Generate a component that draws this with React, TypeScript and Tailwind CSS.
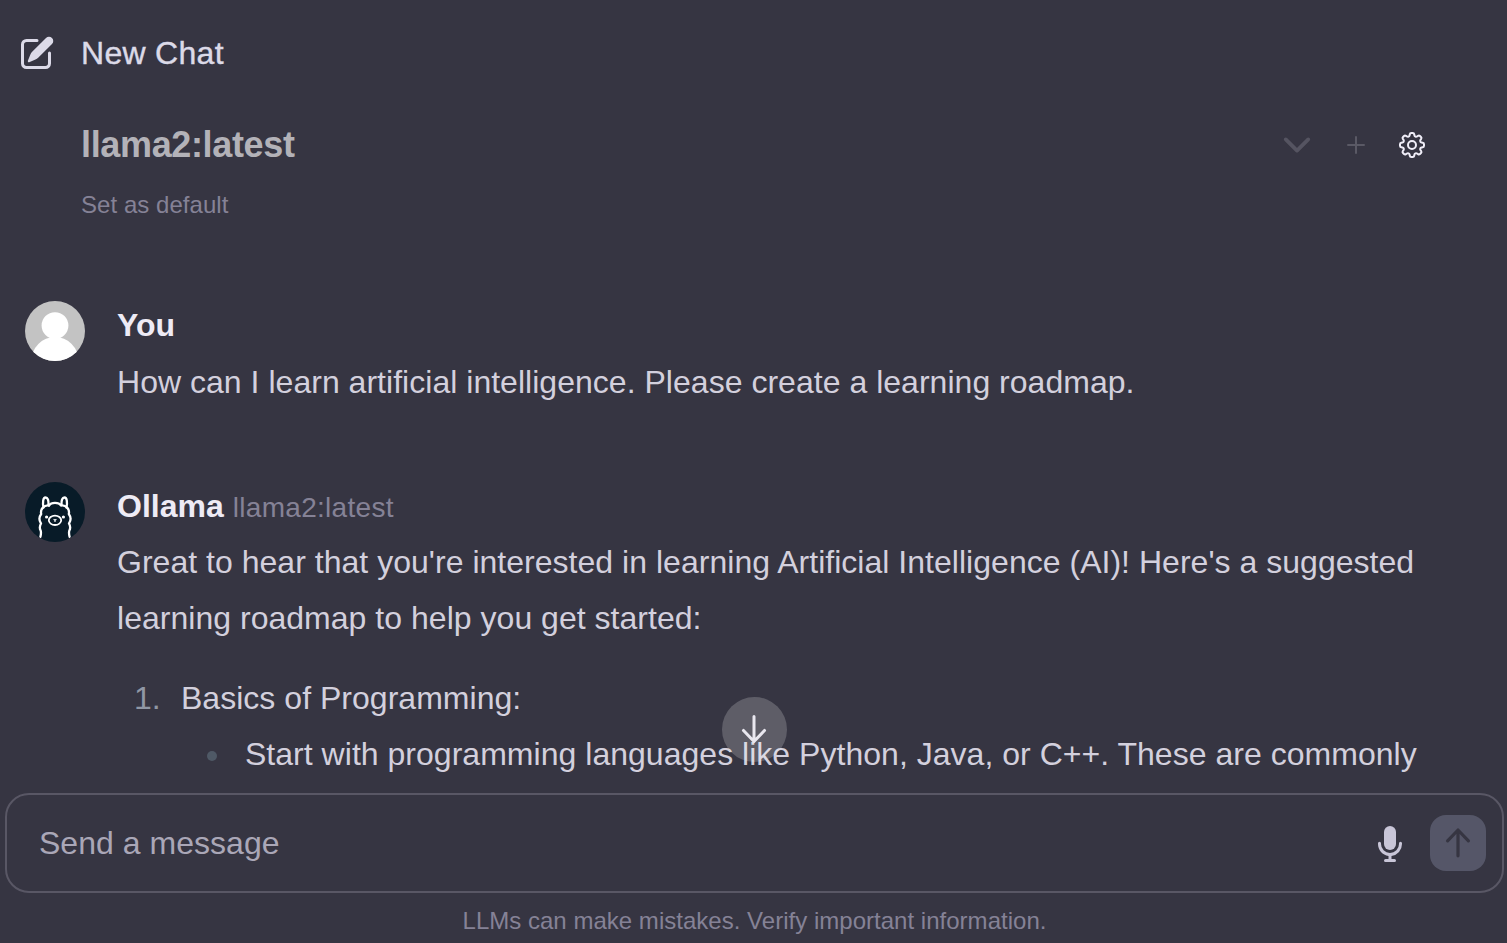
import React from 'react';

type IconProps = {
  className?: string;
};

const PencilSquareIcon = ({ className }: IconProps) => (
  <svg className={className} viewBox="0 0 20 20" fill="currentColor">
    <path d="m5.433 13.917 1.262-3.155A4 4 0 0 1 7.58 9.42l6.92-6.918a2.121 2.121 0 0 1 3 3l-6.92 6.918c-.383.383-.84.685-1.343.886l-3.154 1.262a.5.5 0 0 1-.65-.65Z" />
    <path d="M3.5 5.75c0-.69.56-1.25 1.25-1.25H10A.75.75 0 0 0 10 3H4.75A2.75 2.75 0 0 0 2 5.75v9.5A2.75 2.75 0 0 0 4.75 18h9.5A2.75 2.75 0 0 0 17 15.25V10a.75.75 0 0 0-1.5 0v5.25c0 .69-.56 1.25-1.25 1.25h-9.5c-.69 0-1.25-.56-1.25-1.25v-9.5Z" />
  </svg>
);

const ChevronIcon = ({ className }: IconProps) => (
  <svg className={className} viewBox="0 0 24 24" fill="none" stroke="currentColor" strokeWidth="2.5" strokeLinecap="round" strokeLinejoin="round">
    <path d="m19.5 8.25-7.5 7.5-7.5-7.5" />
  </svg>
);

const PlusIcon = ({ className }: IconProps) => (
  <svg className={className} viewBox="0 0 24 24" fill="none" stroke="currentColor" strokeWidth="1.5" strokeLinecap="round">
    <path d="M12 6v12m6-6H6" />
  </svg>
);

const CogIcon = ({ className }: IconProps) => (
  <svg className={className} viewBox="0 0 24 24" fill="none" stroke="currentColor" strokeWidth="1.5" strokeLinecap="round" strokeLinejoin="round">
    <path d="M10.343 3.94c.09-.542.56-.94 1.11-.94h1.093c.55 0 1.02.398 1.11.94l.149.894c.07.424.384.764.78.93.398.164.855.142 1.205-.108l.737-.527a1.125 1.125 0 0 1 1.45.12l.773.774c.39.389.44 1.002.12 1.45l-.527.737c-.25.35-.272.806-.107 1.204.165.397.505.71.93.78l.893.15c.543.09.94.559.94 1.109v1.094c0 .55-.397 1.02-.94 1.11l-.894.149c-.424.07-.764.383-.929.78-.165.398-.143.854.107 1.204l.527.738c.32.447.269 1.06-.12 1.45l-.774.773a1.125 1.125 0 0 1-1.449.12l-.738-.527c-.35-.25-.806-.272-1.203-.107-.398.165-.71.505-.781.929l-.149.894c-.09.542-.56.94-1.11.94h-1.094c-.55 0-1.019-.398-1.11-.94l-.148-.894c-.071-.424-.384-.764-.781-.93-.398-.164-.854-.142-1.204.108l-.738.527c-.447.32-1.06.269-1.45-.12l-.773-.774a1.125 1.125 0 0 1-.12-1.45l.527-.737c.25-.35.272-.806.108-1.204-.165-.397-.506-.71-.93-.78l-.894-.15c-.542-.09-.94-.56-.94-1.109v-1.094c0-.55.398-1.02.94-1.11l.894-.149c.424-.07.765-.383.93-.78.165-.398.143-.854-.108-1.204l-.526-.738a1.125 1.125 0 0 1 .12-1.45l.773-.773a1.125 1.125 0 0 1 1.45-.12l.737.527c.35.25.807.272 1.204.107.397-.165.71-.505.78-.929l.15-.894Z" />
    <path d="M15 12a3 3 0 1 1-6 0 3 3 0 0 1 6 0Z" />
  </svg>
);

const ArrowDownIcon = ({ className }: IconProps) => (
  <svg className={className} viewBox="0 0 20 20" fill="currentColor">
    <path d="M10 3a.75.75 0 0 1 .75.75v10.638l3.96-4.158a.75.75 0 1 1 1.08 1.04l-5.25 5.5a.75.75 0 0 1-1.08 0l-5.25-5.5a.75.75 0 1 1 1.08-1.04l3.96 4.158V3.75A.75.75 0 0 1 10 3Z" />
  </svg>
);

const ArrowUpIcon = ({ className }: IconProps) => (
  <svg className={className} viewBox="0 0 20 20" fill="none" stroke="currentColor" strokeWidth="1.6" strokeLinecap="round" strokeLinejoin="round">
    <path d="M10 16.4V3.5M4.8 8.9 10 3.5l5.2 5.4" />
  </svg>
);

const MicIcon = ({ className }: IconProps) => (
  <svg className={className} viewBox="0 0 20 20" fill="currentColor">
    <path d="M7 4a3 3 0 0 1 6 0v6a3 3 0 1 1-6 0V4Z" />
    <path d="M5.5 9.643a.75.75 0 0 0-1.5 0V10c0 3.06 2.29 5.585 5.25 5.954V17.5h-1.5a.75.75 0 0 0 0 1.5h4.5a.75.75 0 0 0 0-1.5h-1.5v-1.546A6.001 6.001 0 0 0 16 10v-.357a.75.75 0 0 0-1.5 0V10a4.5 4.5 0 0 1-9 0v-.357Z" />
  </svg>
);

const UserAvatar = () => (
  <svg className="size-[60px] shrink-0 rounded-full" viewBox="0 0 60 60">
    <rect width="60" height="60" fill="#c3c3c3" />
    <circle cx="30" cy="24.6" r="13.4" fill="#fff" />
    <circle cx="30" cy="59.5" r="23.5" fill="#fff" />
  </svg>
);

const LlamaAvatar = () => (
  <svg className="size-[60px] shrink-0 rounded-full" viewBox="0 0 60 60">
    <rect width="60" height="60" fill="#081b28" />
    <g fill="none" stroke="#fff" strokeWidth="2.3" strokeLinecap="round" strokeLinejoin="round">
      {/* ears */}
      <path d="M18.500 25.500c-1-5-.5-10 2-10 2.300 0 3.200 3 3 7" />
      <path d="M41.500 25.500c1-5 .5-10-2-10-2.300 0-3.200 3-3 7" />
      {/* fleece */}
      <path d="M24 23.500c2.200-3.400 9.800-3.400 12 0 4.800-.8 9 3.600 7.800 8.500 2.200 3 2.100 6.700.2 9.500 1.500 2.700 1.600 4.900.3 7.200-.6 1.900-.3 3.700.3 6.100" />
      <path d="M24 23.500c-4.800-.8-9 3.600-7.800 8.500-2.200 3-2.100 6.700-.2 9.500-1.500 2.700-1.600 4.900-.3 7.200.6 1.900.3 3.700-.3 6.100" />
      <ellipse cx="30" cy="38.300" rx="6.200" ry="4.700" strokeWidth="1.800" />
      <path d="M29 37.500l1 .7 1-.7M30 38v1.500" strokeWidth="1.200" />
    </g>
    <circle cx="21.600" cy="35" r="1.600" fill="#fff" />
    <circle cx="38.400" cy="35" r="1.600" fill="#fff" />
  </svg>
);

type MessageProps = {
  avatar: React.ReactNode;
  name: string;
  model?: string;
  children: React.ReactNode;
};

const Message = ({ avatar, name, model, children }: MessageProps) => (
  <div className="flex gap-8 pl-[25px]">
    {avatar}
    <div className="min-w-0 flex-1">
      <div className="h-[52px] leading-[48px] whitespace-nowrap">
        <span className="font-bold text-[#eeebf5]">{name}</span>
        {model && <span className="ml-[9px] text-[28px] tracking-[0.3px] text-[#858296]">{model}</span>}
      </div>
      <div className="leading-[56px] tracking-[0.025px] text-[#d3d0dd]">{children}</div>
    </div>
  </div>
);

const App = () => {
  return (
    <div className="flex h-[943px] w-[1507px] flex-col overflow-hidden bg-[#363542] font-['Liberation_Sans',Arial,sans-serif] text-[32px]">
      <header className="h-[301px] shrink-0">
        <div className="flex items-center gap-6 pt-[33px] pl-[17px] text-[#dcdae8]">
          <PencilSquareIcon className="size-10" />
          <span className="leading-10 tracking-[0.3px] [-webkit-text-stroke:0.4px]">New Chat</span>
        </div>
        <div className="mt-12 flex h-12 items-center pr-[79px] pl-[81px]">
          <h1 className="flex-1 text-[36px] leading-12 font-bold tracking-[-0.35px] text-[#b3b2b8]">llama2:latest</h1>
          <ChevronIcon className="size-9 text-[#555461]" />
          <PlusIcon className="ml-[25px] size-8 text-[#5a5965]" />
          <CogIcon className="ml-6 size-8 text-[#f0eef8]" />
        </div>
        <p className="mt-5 pl-[81px] text-2xl tracking-[0.05px] text-[#858296]">Set as default</p>
      </header>

      <main className="relative h-[492px] shrink-0">
        <Message avatar={<UserAvatar />} name="You">
          <p className="pt-px">How can I learn artificial intelligence. Please create a learning roadmap.</p>
        </Message>
        <div className="mt-[72px]">
          <Message avatar={<LlamaAvatar />} name="Ollama" model="llama2:latest">
            <p className="whitespace-nowrap">
              Great to hear that you're interested in learning Artificial Intelligence (AI)! Here's a suggested
              <br />
              learning roadmap to help you get started:
            </p>
            <div className="mt-6 flex">
              <span className="w-[64px] pl-[17px] text-[#9097a5]">1.</span>
              <div>
                <p>Basics of Programming:</p>
                <div className="flex items-center whitespace-nowrap">
                  <span className="mt-[3px] mr-7 ml-[26px] size-2.5 rounded-full bg-[#4f5966]" />
                  <p>Start with programming languages like Python, Java, or C++. These are commonly</p>
                </div>
              </div>
            </div>
          </Message>
        </div>
        <button className="absolute bottom-[31px] left-[722px] flex size-[65px] items-center justify-center rounded-full bg-white/20 pr-px pb-px text-[#e9e7ef]">
          <ArrowDownIcon className="size-10" />
        </button>
      </main>

      <form className="mr-[3px] ml-[5px] flex h-[100px] shrink-0 items-center rounded-3xl border-2 border-[#595765] pr-4 pl-8">
        <span className="flex-1 tracking-[0.03px] text-[#aaa7b7]">Send a message</span>
        <MicIcon className="mt-0.5 size-10 text-[#c9c6d8]" />
        <button type="button" className="ml-5 flex size-14 items-center justify-center rounded-2xl bg-[#555668] text-[#363542]">
          <ArrowUpIcon className="size-10" />
        </button>
      </form>
      <p className="mt-3 pl-0.5 text-center text-2xl leading-8 tracking-[0.02px] text-[#858296]">
        LLMs can make mistakes. Verify important information.
      </p>
    </div>
  );
};

export default App;
